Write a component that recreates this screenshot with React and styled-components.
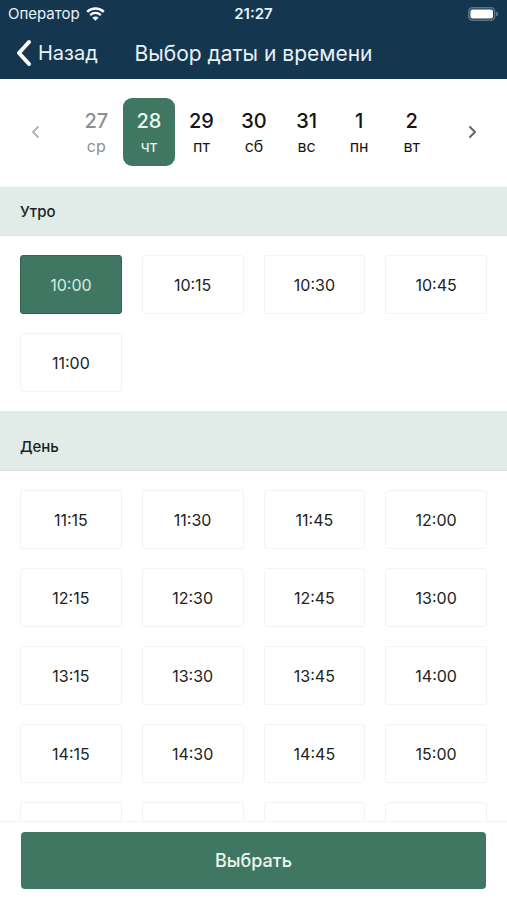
import React, { useState } from 'react'
import styled, { createGlobalStyle } from 'styled-components'

const days = [
  { date: 27, name: 'ср', past: true },
  { date: 28, name: 'чт' },
  { date: 29, name: 'пт' },
  { date: 30, name: 'сб' },
  { date: 31, name: 'вс' },
  { date: 1, name: 'пн' },
  { date: 2, name: 'вт' },
]

const morning = ['10:00', '10:15', '10:30', '10:45', '11:00']

const daytime = [
  '11:15', '11:30', '11:45', '12:00',
  '12:15', '12:30', '12:45', '13:00',
  '13:15', '13:30', '13:45', '14:00',
  '14:15', '14:30', '14:45', '15:00',
  '15:15', '15:30', '15:45', '16:00',
]

const Chevron = ({ width, height, stroke, points }) => (
  <svg width={width} height={height} viewBox={`0 0 ${width} ${height}`} fill="none" aria-hidden="true">
    <polyline points={points} stroke="currentColor" strokeWidth={stroke} strokeLinecap="round" strokeLinejoin="round" />
  </svg>
)

const WifiIcon = () => (
  <svg width="19" height="14" viewBox="0 0 19 14" fill="none" stroke="currentColor" aria-hidden="true">
    <path d="M1.2 4.9a12 12 0 0 1 16.6 0" strokeWidth="2.4" />
    <path d="M4.2 8.1a7.6 7.6 0 0 1 10.6 0" strokeWidth="2.3" />
    <path d="M9.5 13.8 6.4 10.7a4.4 4.4 0 0 1 6.2 0z" fill="currentColor" stroke="none" />
  </svg>
)

const BatteryIcon = () => (
  <svg width="31" height="14" viewBox="0 0 31 14" fill="none" aria-hidden="true">
    <rect x="0.8" y="0.8" width="25.8" height="12.4" rx="3.6" stroke="#5b7488" strokeWidth="1.6" />
    <rect x="2.4" y="2.4" width="22.6" height="9.2" rx="2" fill="#fff" />
    <path d="M28 4.6c1.6.5 2.2 1.4 2.2 2.4S29.6 8.9 28 9.4z" fill="#5b7488" />
  </svg>
)

const Slots = ({ times, selected, onSelect }) => (
  <SlotGrid>
    {times.map((time) => (
      <SlotButton
        key={time}
        type="button"
        $active={time === selected}
        aria-pressed={time === selected}
        onClick={() => onSelect(time)}
      >
        {time}
      </SlotButton>
    ))}
  </SlotGrid>
)

const App = () => {
  const [day, setDay] = useState(28)
  const [time, setTime] = useState('10:00')

  return (
    <Screen>
      <GlobalStyle />
      <Header>
        <StatusBar>
          <Carrier>Оператор <WifiIcon /></Carrier>
          <Clock>21:27</Clock>
          <Battery><BatteryIcon /></Battery>
        </StatusBar>
        <NavBar>
          <BackButton type="button">
            <Chevron width={17} height={28} stroke={4} points="14,3 4,14 14,25" />
            Назад
          </BackButton>
          <Title>Выбор даты и времени</Title>
        </NavBar>
      </Header>

      <DateStrip>
        <ArrowButton type="button" aria-label="Предыдущая неделя" disabled>
          <Chevron width={10} height={14} stroke={2} points="8,2 3,7 8,12" />
        </ArrowButton>
        <DayList>
          {days.map((item) => (
            <DayButton
              key={item.date}
              type="button"
              $active={item.date === day}
              disabled={item.past}
              aria-pressed={item.date === day}
              onClick={() => setDay(item.date)}
            >
              <DayNumber>{item.date}</DayNumber>
              <DayName>{item.name}</DayName>
            </DayButton>
          ))}
        </DayList>
        <ArrowButton type="button" aria-label="Следующая неделя">
          <Chevron width={10} height={14} stroke={2} points="2,2 7,7 2,12" />
        </ArrowButton>
      </DateStrip>

      <Schedule>
        <SectionTitle>Утро</SectionTitle>
        <Slots times={morning} selected={time} onSelect={setTime} />
        <SectionTitle $tall>День</SectionTitle>
        <Slots times={daytime} selected={time} onSelect={setTime} />
      </Schedule>

      <Footer>
        <SubmitButton type="button">Выбрать</SubmitButton>
      </Footer>
    </Screen>
  )
}

const GlobalStyle = createGlobalStyle`
  * {
    box-sizing: border-box;
  }

  body {
    margin: 0;
    background: #fff;
    color: #222;
    font-family: Inter, "Liberation Sans", sans-serif;
  }

  button {
    margin: 0;
    padding: 0;
    border: none;
    background: none;
    color: inherit;
    font: inherit;
    cursor: pointer;
  }
`

const Screen = styled.div`
  display: flex;
  flex-direction: column;
  height: 100vh;
`

const Header = styled.header`
  flex: none;
  background: #14364f;
  color: #e9f1f8;
`

const StatusBar = styled.div`
  display: grid;
  grid-template-columns: 1fr auto 1fr;
  align-items: center;
  height: 27px;
  padding: 0 8px;
  font-size: 15px;
`

const Carrier = styled.div`
  display: flex;
  align-items: center;
  gap: 6px;

  svg {
    color: #fff;
  }
`

const Clock = styled.div`
  font-weight: 600;
`

const Battery = styled.div`
  display: flex;
  justify-content: flex-end;
`

const NavBar = styled.div`
  display: grid;
  grid-template-columns: 1fr auto 1fr;
  align-items: center;
  height: 52px;
  padding: 0 15px;
`

const BackButton = styled.button`
  display: flex;
  align-items: center;
  justify-self: start;
  gap: 6px;
  font-size: 20px;

  svg {
    color: #fff;
  }
`

const Title = styled.h1`
  margin: 0;
  font-size: 21px;
  font-weight: 400;
`

const DateStrip = styled.div`
  display: grid;
  grid-template-columns: 70px 1fr 69px;
  flex: none;
  padding: 19px 0 20px;
  border-bottom: 1px solid #fafafa;
`

const ArrowButton = styled.button`
  display: flex;
  align-items: center;
  justify-content: center;
  color: #666;

  &:disabled {
    color: #b5b5b5;
    cursor: default;
  }
`

const DayList = styled.div`
  display: grid;
  grid-template-columns: repeat(7, 1fr);
`

const DayButton = styled.button`
  display: flex;
  flex-direction: column;
  align-items: center;
  justify-content: center;
  height: 68px;
  padding-top: 4px;
  border-radius: 9px;
  background: ${(props) => (props.$active ? '#407763' : 'transparent')};
  color: ${(props) => (props.$active ? '#e9f7f0' : '#151515')};

  &:disabled {
    color: #8f8f8f;
    cursor: default;
  }
`

const DayNumber = styled.span`
  font-size: 20px;
  font-weight: 500;
  line-height: 25px;
`

const DayName = styled.span`
  font-size: 16px;
  line-height: 25px;
`

const Schedule = styled.main`
  flex: 1;
  min-height: 0;
  overflow-y: auto;
  scrollbar-width: none;
`

const SectionTitle = styled.h2`
  display: flex;
  align-items: center;
  height: ${(props) => (props.$tall ? '60px' : '49px')};
  margin: 0;
  padding: ${(props) => (props.$tall ? '12px' : '0')} 20px 0;
  border-bottom: 1px solid #dae4e1;
  background: #e1ece9;
  font-size: 15px;
  font-weight: 500;
`

const SlotGrid = styled.div`
  display: grid;
  grid-template-columns: repeat(4, 1fr);
  gap: 19px 20px;
  padding: 19px 20px;
`

const SlotButton = styled.button`
  height: 59px;
  border: 1px solid ${(props) => (props.$active ? '#35634f' : '#f3f3f3')};
  border-radius: 3px;
  background: ${(props) => (props.$active ? '#407763' : '#fff')};
  color: ${(props) => (props.$active ? '#d5ece2' : '#222')};
  font-size: 16px;
`

const Footer = styled.footer`
  flex: none;
  padding: 10px 21px 11px;
  border-top: 1px solid #f3f3f3;
`

const SubmitButton = styled.button`
  width: 100%;
  height: 57px;
  border-radius: 4px;
  background: #407763;
  color: #e9f7f0;
  font-size: 18px;
  font-weight: 500;
`

export default App
